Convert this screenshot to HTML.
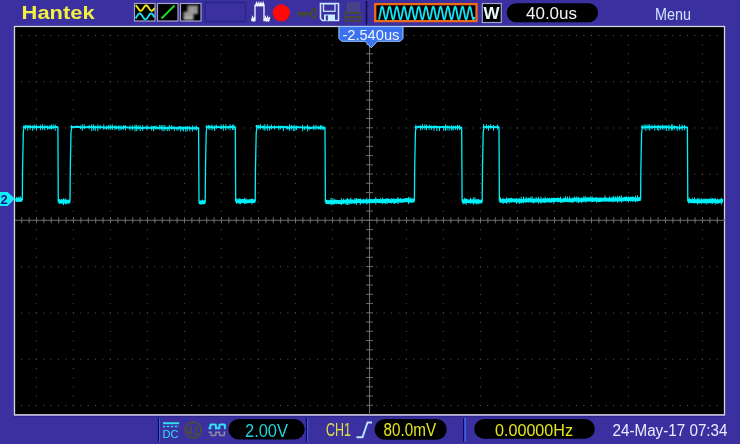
<!DOCTYPE html>
<html><head><meta charset="utf-8"><style>
html,body{margin:0;padding:0;background:#3a30a0;width:740px;height:444px;overflow:hidden}
svg{display:block;will-change:transform}
</style></head><body>
<svg width="740" height="444" viewBox="0 0 740 444">
<defs><filter id="bl" x="-20%" y="-20%" width="140%" height="140%"><feGaussianBlur stdDeviation="0.8"/></filter></defs>
<rect width="740" height="444" fill="#3a30a0"/>
<rect x="14.5" y="26.5" width="710" height="388.3" fill="#000" stroke="#d4d4dc" stroke-width="1.3"/>
<line x1="14" y1="415.4" x2="725" y2="415.4" stroke="#a8a6d0" stroke-width="1"/>
<line x1="14" y1="416.6" x2="725" y2="416.6" stroke="#2c2488" stroke-width="1"/>
<line x1="21" y1="35.50" x2="720" y2="35.50" stroke="#555555" stroke-width="1" stroke-dasharray="1 6.4"/>
<line x1="21" y1="81.75" x2="720" y2="81.75" stroke="#555555" stroke-width="1" stroke-dasharray="1 6.4"/>
<line x1="21" y1="128.00" x2="720" y2="128.00" stroke="#555555" stroke-width="1" stroke-dasharray="1 6.4"/>
<line x1="21" y1="174.25" x2="720" y2="174.25" stroke="#555555" stroke-width="1" stroke-dasharray="1 6.4"/>
<line x1="21" y1="220.50" x2="720" y2="220.50" stroke="#555555" stroke-width="1" stroke-dasharray="1 6.4"/>
<line x1="21" y1="266.75" x2="720" y2="266.75" stroke="#555555" stroke-width="1" stroke-dasharray="1 6.4"/>
<line x1="21" y1="313.00" x2="720" y2="313.00" stroke="#555555" stroke-width="1" stroke-dasharray="1 6.4"/>
<line x1="21" y1="359.25" x2="720" y2="359.25" stroke="#555555" stroke-width="1" stroke-dasharray="1 6.4"/>
<line x1="21" y1="405.50" x2="720" y2="405.50" stroke="#555555" stroke-width="1" stroke-dasharray="1 6.4"/>
<line x1="36.40" y1="35" x2="36.40" y2="406" stroke="#585858" stroke-width="1" stroke-dasharray="1 8.25"/>
<line x1="73.40" y1="35" x2="73.40" y2="406" stroke="#585858" stroke-width="1" stroke-dasharray="1 8.25"/>
<line x1="110.40" y1="35" x2="110.40" y2="406" stroke="#585858" stroke-width="1" stroke-dasharray="1 8.25"/>
<line x1="147.40" y1="35" x2="147.40" y2="406" stroke="#585858" stroke-width="1" stroke-dasharray="1 8.25"/>
<line x1="184.40" y1="35" x2="184.40" y2="406" stroke="#585858" stroke-width="1" stroke-dasharray="1 8.25"/>
<line x1="221.40" y1="35" x2="221.40" y2="406" stroke="#585858" stroke-width="1" stroke-dasharray="1 8.25"/>
<line x1="258.40" y1="35" x2="258.40" y2="406" stroke="#585858" stroke-width="1" stroke-dasharray="1 8.25"/>
<line x1="295.40" y1="35" x2="295.40" y2="406" stroke="#585858" stroke-width="1" stroke-dasharray="1 8.25"/>
<line x1="332.40" y1="35" x2="332.40" y2="406" stroke="#585858" stroke-width="1" stroke-dasharray="1 8.25"/>
<line x1="369.40" y1="35" x2="369.40" y2="406" stroke="#585858" stroke-width="1" stroke-dasharray="1 8.25"/>
<line x1="406.40" y1="35" x2="406.40" y2="406" stroke="#585858" stroke-width="1" stroke-dasharray="1 8.25"/>
<line x1="443.40" y1="35" x2="443.40" y2="406" stroke="#585858" stroke-width="1" stroke-dasharray="1 8.25"/>
<line x1="480.40" y1="35" x2="480.40" y2="406" stroke="#585858" stroke-width="1" stroke-dasharray="1 8.25"/>
<line x1="517.40" y1="35" x2="517.40" y2="406" stroke="#585858" stroke-width="1" stroke-dasharray="1 8.25"/>
<line x1="554.40" y1="35" x2="554.40" y2="406" stroke="#585858" stroke-width="1" stroke-dasharray="1 8.25"/>
<line x1="591.40" y1="35" x2="591.40" y2="406" stroke="#585858" stroke-width="1" stroke-dasharray="1 8.25"/>
<line x1="628.40" y1="35" x2="628.40" y2="406" stroke="#585858" stroke-width="1" stroke-dasharray="1 8.25"/>
<line x1="665.40" y1="35" x2="665.40" y2="406" stroke="#585858" stroke-width="1" stroke-dasharray="1 8.25"/>
<line x1="702.40" y1="35" x2="702.40" y2="406" stroke="#585858" stroke-width="1" stroke-dasharray="1 8.25"/>
<line x1="15" y1="220.3" x2="725" y2="220.3" stroke="#6e6e6e" stroke-width="1"/>
<line x1="369.5" y1="27" x2="369.5" y2="415" stroke="#6e6e6e" stroke-width="1"/>
<path d="M21.70 217.3V223.3M29.10 217.3V223.3M36.50 217.3V223.3M43.90 217.3V223.3M51.30 217.3V223.3M58.70 217.3V223.3M66.10 217.3V223.3M73.50 217.3V223.3M80.90 217.3V223.3M88.30 217.3V223.3M95.70 217.3V223.3M103.10 217.3V223.3M110.50 217.3V223.3M117.90 217.3V223.3M125.30 217.3V223.3M132.70 217.3V223.3M140.10 217.3V223.3M147.50 217.3V223.3M154.90 217.3V223.3M162.30 217.3V223.3M169.70 217.3V223.3M177.10 217.3V223.3M184.50 217.3V223.3M191.90 217.3V223.3M199.30 217.3V223.3M206.70 217.3V223.3M214.10 217.3V223.3M221.50 217.3V223.3M228.90 217.3V223.3M236.30 217.3V223.3M243.70 217.3V223.3M251.10 217.3V223.3M258.50 217.3V223.3M265.90 217.3V223.3M273.30 217.3V223.3M280.70 217.3V223.3M288.10 217.3V223.3M295.50 217.3V223.3M302.90 217.3V223.3M310.30 217.3V223.3M317.70 217.3V223.3M325.10 217.3V223.3M332.50 217.3V223.3M339.90 217.3V223.3M347.30 217.3V223.3M354.70 217.3V223.3M362.10 217.3V223.3M369.50 217.3V223.3M376.90 217.3V223.3M384.30 217.3V223.3M391.70 217.3V223.3M399.10 217.3V223.3M406.50 217.3V223.3M413.90 217.3V223.3M421.30 217.3V223.3M428.70 217.3V223.3M436.10 217.3V223.3M443.50 217.3V223.3M450.90 217.3V223.3M458.30 217.3V223.3M465.70 217.3V223.3M473.10 217.3V223.3M480.50 217.3V223.3M487.90 217.3V223.3M495.30 217.3V223.3M502.70 217.3V223.3M510.10 217.3V223.3M517.50 217.3V223.3M524.90 217.3V223.3M532.30 217.3V223.3M539.70 217.3V223.3M547.10 217.3V223.3M554.50 217.3V223.3M561.90 217.3V223.3M569.30 217.3V223.3M576.70 217.3V223.3M584.10 217.3V223.3M591.50 217.3V223.3M598.90 217.3V223.3M606.30 217.3V223.3M613.70 217.3V223.3M621.10 217.3V223.3M628.50 217.3V223.3M635.90 217.3V223.3M643.30 217.3V223.3M650.70 217.3V223.3M658.10 217.3V223.3M665.50 217.3V223.3M672.90 217.3V223.3M680.30 217.3V223.3M687.70 217.3V223.3M695.10 217.3V223.3M702.50 217.3V223.3M709.90 217.3V223.3M717.30 217.3V223.3M366.1 35.30H372.9M366.1 44.55H372.9M366.1 53.80H372.9M366.1 63.05H372.9M366.1 72.30H372.9M366.1 81.55H372.9M366.1 90.80H372.9M366.1 100.05H372.9M366.1 109.30H372.9M366.1 118.55H372.9M366.1 127.80H372.9M366.1 137.05H372.9M366.1 146.30H372.9M366.1 155.55H372.9M366.1 164.80H372.9M366.1 174.05H372.9M366.1 183.30H372.9M366.1 192.55H372.9M366.1 201.80H372.9M366.1 211.05H372.9M366.1 220.30H372.9M366.1 229.55H372.9M366.1 238.80H372.9M366.1 248.05H372.9M366.1 257.30H372.9M366.1 266.55H372.9M366.1 275.80H372.9M366.1 285.05H372.9M366.1 294.30H372.9M366.1 303.55H372.9M366.1 312.80H372.9M366.1 322.05H372.9M366.1 331.30H372.9M366.1 340.55H372.9M366.1 349.80H372.9M366.1 359.05H372.9M366.1 368.30H372.9M366.1 377.55H372.9M366.1 386.80H372.9M366.1 396.05H372.9M366.1 405.30H372.9" stroke="#6e6e6e" stroke-width="1"/>
<path d="M15.0 199.8L22.3 199.8L22.6 167.2 L23.3 133.2 Q23.6 127.2 24.9 127.2L57.9 127.3L58.3 201.5L70.0 201.5L70.3 167.2 L71.0 133.2 Q71.3 127.2 72.6 127.2L198.6 128.2L199.0 202.0L205.2 202.0L205.5 167.2 L206.2 133.2 Q206.5 127.2 207.8 127.2L235.3 127.2L235.7 201.2L255.2 201.2L255.5 167.2 L256.2 133.2 Q256.5 127.2 257.8 127.2L325.0 127.6L325.4 202.0L414.4 200.4L414.7 167.2 L415.4 133.2 Q415.7 127.2 417.0 127.2L461.7 127.4L462.1 201.3L482.2 201.3L482.5 167.2 L483.2 133.2 Q483.5 127.2 484.8 127.2L499.0 127.1L499.4 200.9L640.6 199.0L640.9 167.2 L641.6 133.2 Q641.9 127.2 643.2 127.2L687.4 127.4L687.8 201.2L723.0 201.2" fill="none" stroke="#00f0fa" stroke-width="1.3" stroke-linejoin="round"/><path d="M15.5 199.8L17.0 199.7L19.0 200.0L21.0 199.7L22.3 199.8M58.4 201.5L59.9 201.4L61.9 201.8L63.9 201.1L65.9 202.0L67.9 201.7L70.0 201.5M199.1 202.0L200.6 202.5L202.6 202.3L205.2 202.0M235.8 201.2L237.3 201.1L239.3 201.1L241.3 201.2L243.3 201.0L245.3 201.4L247.3 201.3L249.3 201.2L251.3 201.0L253.3 201.1L255.2 201.2M325.5 202.0L327.0 201.8L329.0 202.3L331.0 201.8L333.0 202.1L335.0 201.6L337.0 201.8L339.0 202.0L341.0 202.2L343.0 201.6L345.0 201.6L347.0 201.7L349.0 201.1L351.0 201.5L353.0 201.3L355.0 201.6L357.0 201.1L359.0 200.8L361.0 201.4L363.0 201.4L365.0 201.1L367.0 201.5L369.0 201.1L371.0 201.0L373.0 201.3L375.0 200.6L377.0 200.9L379.0 201.0L381.0 201.3L383.0 200.9L385.0 201.0L387.0 200.7L389.0 200.9L391.0 201.3L393.0 200.6L395.0 201.5L397.0 200.5L399.0 200.7L401.0 200.7L403.0 200.9L405.0 200.2L407.0 199.9L409.0 200.7L411.0 200.7L413.0 200.6L414.4 200.4M462.2 201.3L463.7 201.3L465.7 200.8L467.7 201.1L469.7 201.3L471.7 201.2L473.7 201.3L475.7 201.5L477.7 201.5L479.7 201.6L482.2 201.3M499.5 200.9L501.0 200.9L503.0 200.8L505.0 200.9L507.0 200.6L509.0 200.2L511.0 200.1L513.0 200.3L515.0 200.5L517.0 200.7L519.0 200.6L521.0 200.8L523.0 200.6L525.0 200.3L527.0 200.3L529.0 199.9L531.0 200.4L533.0 200.6L535.0 200.6L537.0 200.4L539.0 200.3L541.0 200.6L543.0 200.3L545.0 200.5L547.0 200.4L549.0 200.3L551.0 200.6L553.0 200.0L555.0 200.0L557.0 199.9L559.0 199.9L561.0 200.5L563.0 200.6L565.0 200.0L567.0 200.2L569.0 200.3L571.0 200.2L573.0 200.3L575.0 199.5L577.0 199.7L579.0 200.0L581.0 200.2L583.0 199.8L585.0 199.5L587.0 199.6L589.0 199.5L591.0 199.4L593.0 200.1L595.0 199.4L597.0 199.6L599.0 200.2L601.0 199.9L603.0 199.6L605.0 199.3L607.0 199.6L609.0 199.9L611.0 199.6L613.0 199.7L615.0 199.4L617.0 199.5L619.0 199.2L621.0 199.4L623.0 199.6L625.0 198.8L627.0 199.2L629.0 199.2L631.0 199.0L633.0 199.0L635.0 199.3L637.0 199.6L639.0 199.2L640.6 199.0M687.9 201.2L689.4 200.6L691.4 201.4L693.4 201.0L695.4 201.1L697.4 201.2L699.4 201.4L701.4 201.1L703.4 201.2L705.4 201.0L707.4 201.2L709.4 200.8L711.4 201.2L713.4 200.6L715.4 201.1L717.4 201.8L719.4 201.2L721.4 200.8L723.0 201.2" fill="none" stroke="#00f0fa" stroke-width="3.8"/><path d="M22.8 126.9L24.3 126.8L26.3 126.4L28.3 126.4L30.3 126.7L32.3 126.9L34.3 127.1L36.3 127.0L38.3 127.2L40.3 126.9L42.3 127.2L44.3 127.2L46.3 126.9L48.3 127.7L50.3 127.3L52.3 127.6L54.3 127.0L56.3 127.0L57.9 127.3M70.5 126.9L72.0 126.9L74.0 127.3L76.0 126.6L78.0 126.7L80.0 127.2L82.0 127.4L84.0 127.3L86.0 127.2L88.0 127.1L90.0 127.1L92.0 127.3L94.0 127.1L96.0 127.2L98.0 127.4L100.0 127.2L102.0 127.4L104.0 127.4L106.0 127.9L108.0 127.4L110.0 127.2L112.0 127.2L114.0 127.3L116.0 127.6L118.0 127.3L120.0 127.5L122.0 128.0L124.0 126.7L126.0 127.1L128.0 127.6L130.0 127.6L132.0 127.6L134.0 127.4L136.0 127.8L138.0 127.7L140.0 127.4L142.0 128.3L144.0 127.7L146.0 127.5L148.0 127.7L150.0 127.6L152.0 127.7L154.0 126.9L156.0 127.6L158.0 128.1L160.0 127.4L162.0 127.8L164.0 128.1L166.0 128.1L168.0 128.3L170.0 127.4L172.0 127.8L174.0 127.8L176.0 128.1L178.0 128.3L180.0 127.2L182.0 128.3L184.0 127.6L186.0 128.3L188.0 127.6L190.0 128.2L192.0 128.5L194.0 128.1L196.0 128.2L198.6 128.2M205.7 126.9L207.2 127.1L209.2 127.2L211.2 126.9L213.2 127.7L215.2 127.4L217.2 127.0L219.2 127.1L221.2 127.8L223.2 127.0L225.2 127.4L227.2 127.4L229.2 127.1L231.2 126.8L233.2 127.2L235.3 127.2M255.7 126.9L257.2 126.1L259.2 126.7L261.2 127.0L263.2 127.2L265.2 127.7L267.2 127.1L269.2 127.4L271.2 127.3L273.2 127.4L275.2 127.3L277.2 127.1L279.2 127.3L281.2 126.8L283.2 127.5L285.2 126.9L287.2 127.3L289.2 127.9L291.2 127.2L293.2 127.3L295.2 127.6L297.2 127.3L299.2 127.1L301.2 127.4L303.2 127.6L305.2 127.6L307.2 127.2L309.2 128.0L311.2 128.0L313.2 127.5L315.2 127.6L317.2 127.4L319.2 128.0L321.2 127.3L323.2 127.8L325.0 127.6M414.9 126.9L416.4 127.7L418.4 126.8L420.4 126.8L422.4 127.2L424.4 127.0L426.4 126.9L428.4 126.9L430.4 127.0L432.4 127.3L434.4 127.2L436.4 126.8L438.4 127.3L440.4 127.2L442.4 126.9L444.4 127.4L446.4 127.1L448.4 127.1L450.4 127.5L452.4 127.7L454.4 127.1L456.4 127.5L458.4 127.1L460.4 128.1L461.7 127.4M482.7 126.9L484.2 127.1L486.2 127.0L488.2 127.2L490.2 126.7L492.2 127.0L494.2 127.2L496.2 127.1L499.0 127.1M641.1 126.9L642.6 127.2L644.6 127.4L646.6 127.3L648.6 126.8L650.6 127.3L652.6 127.3L654.6 126.6L656.6 126.9L658.6 126.7L660.6 127.1L662.6 127.3L664.6 126.8L666.6 126.5L668.6 127.6L670.6 127.3L672.6 127.7L674.6 126.8L676.6 127.6L678.6 127.9L680.6 127.9L682.6 127.3L684.6 127.4L687.4 127.4" fill="none" stroke="#00f0fa" stroke-width="1.9"/><path d="M16.5 197.1V201.7M18.6 196.9V201.7M20.1 196.1V201.8M23.8 125.6V128.8M25.5 125.0V129.4M27.7 125.2V130.5M30.1 124.7V129.9M32.7 125.3V131.0M34.3 124.5V129.2M36.4 124.6V130.5M40.4 124.8V130.2M42.4 124.2V129.9M44.8 124.7V130.3M47.6 125.4V129.8M49.9 125.1V129.3M51.5 124.6V129.3M53.2 124.4V129.2M55.2 124.4V130.8M59.4 199.0V203.7M61.5 199.0V203.3M63.5 198.4V205.0M65.8 198.3V204.5M71.5 125.2V129.3M80.6 125.4V129.2M82.3 124.2V130.7M84.3 124.4V129.0M89.2 125.0V129.3M91.7 124.5V131.1M93.6 124.2V130.5M95.3 125.7V130.9M97.8 124.5V131.1M100.1 125.0V129.3M103.8 124.4V130.0M106.5 125.7V129.6M108.3 125.0V129.7M110.3 124.5V129.9M112.3 124.5V130.0M115.0 125.2V130.3M116.4 125.8V129.2M118.9 125.3V130.8M121.1 125.3V130.4M123.6 125.2V129.8M125.4 125.3V130.5M129.9 125.4V130.4M132.3 125.4V130.4M135.0 124.8V131.4M136.7 124.7V131.2M138.3 125.6V129.5M140.1 125.2V131.1M142.7 125.1V130.9M147.1 124.8V130.3M151.7 125.7V130.7M153.6 126.0V131.1M155.0 125.8V129.6M156.9 125.6V129.7M159.7 124.8V129.8M161.4 125.2V130.2M163.0 125.0V131.4M164.8 125.0V130.9M167.2 126.6V131.2M169.2 125.0V131.1M171.7 125.2V129.9M174.3 126.1V131.0M177.0 126.5V130.9M178.7 126.5V129.9M180.4 126.3V131.5M182.2 126.5V130.6M183.6 126.8V131.4M185.8 126.0V131.9M187.4 126.1V131.0M189.9 126.0V131.4M192.7 125.4V131.5M195.0 126.3V130.1M196.6 125.6V130.5M202.4 199.5V204.3M206.7 124.8V128.7M208.5 125.0V128.8M209.9 125.3V130.0M212.0 124.6V130.3M214.7 125.2V131.0M216.3 124.7V128.9M221.1 124.4V129.2M223.3 124.4V130.7M225.8 124.3V130.4M228.2 125.9V129.2M230.1 124.4V130.2M232.4 124.7V130.0M233.8 124.6V130.1M236.8 198.4V203.9M239.2 198.0V204.2M240.7 198.7V204.3M242.5 199.2V203.1M244.3 197.8V204.2M246.1 198.3V203.8M252.0 198.3V204.5M256.7 125.0V130.9M258.9 125.0V129.3M260.4 124.2V129.4M263.1 125.3V129.9M264.8 124.1V130.7M267.3 124.2V130.9M269.5 125.8V130.5M271.5 124.7V129.5M274.6 125.3V129.5M278.8 125.4V130.2M280.7 125.7V129.4M283.4 125.6V131.0M286.2 125.8V129.4M287.7 125.9V129.6M289.5 124.4V130.7M291.4 125.1V129.9M293.3 125.6V131.2M294.9 125.0V131.0M296.6 125.7V130.0M302.6 124.9V131.1M304.7 126.2V130.1M307.4 124.7V131.4M309.1 126.0V130.4M313.9 124.9V130.3M316.1 124.9V129.8M318.8 125.8V129.6M320.5 125.1V129.6M322.0 125.3V130.2M323.7 126.4V130.0M326.5 199.9V203.9M331.1 197.9V205.4M332.9 198.0V205.0M334.4 199.1V204.3M336.3 199.8V204.1M341.4 198.1V205.0M343.4 198.7V204.1M346.1 198.9V205.0M347.5 198.0V204.8M349.0 199.4V205.0M350.8 197.7V203.9M354.8 198.0V203.8M356.6 197.9V204.9M360.3 198.4V204.9M363.1 198.8V203.9M366.8 197.8V204.5M369.3 198.6V203.6M371.2 199.0V203.3M373.6 199.0V203.0M375.8 197.1V204.5M378.6 198.9V203.0M380.7 198.1V203.2M382.7 197.6V204.1M385.3 198.7V204.2M387.1 198.1V204.0M388.8 198.4V202.9M391.4 198.2V203.3M394.2 198.3V204.0M398.0 197.1V204.0M400.7 198.1V202.7M408.6 196.9V204.0M410.1 197.2V202.7M412.0 198.0V202.7M415.9 124.7V129.5M420.7 125.4V130.4M422.4 124.2V129.7M424.9 124.2V129.8M426.5 124.8V130.2M429.2 124.7V129.7M431.3 125.4V130.0M434.0 125.0V130.7M436.8 125.7V131.0M439.5 125.9V131.0M443.7 125.7V130.7M445.5 124.5V130.8M447.1 125.3V130.2M449.1 125.6V130.6M451.7 125.1V130.7M453.2 125.9V130.4M455.3 125.6V130.0M457.5 124.9V130.1M459.6 125.0V130.2M463.2 199.2V204.2M464.7 197.7V204.0M466.2 198.5V204.8M470.6 197.7V203.4M473.4 197.4V204.7M475.0 197.4V203.2M476.9 199.0V204.7M478.7 199.0V204.0M483.7 124.0V130.2M486.4 124.3V129.0M488.5 125.1V130.7M490.7 124.2V129.0M493.5 125.1V130.6M497.4 124.5V129.8M500.5 197.4V202.7M503.1 197.9V204.0M505.1 198.6V203.0M506.6 197.3V203.8M509.2 198.2V203.6M511.2 197.7V203.0M516.6 198.2V203.8M519.3 198.0V204.0M521.2 196.8V203.5M523.5 196.6V203.2M526.1 196.8V203.1M528.5 197.9V202.7M530.8 196.7V202.5M532.2 196.6V202.9M533.8 198.3V203.5M536.1 196.9V202.3M538.4 196.7V203.6M541.0 196.6V203.8M543.7 197.9V202.3M545.2 196.7V203.2M547.7 197.7V202.2M549.3 197.8V202.6M551.3 197.7V202.5M553.7 197.5V203.7M558.0 197.3V202.7M560.5 196.7V202.8M563.7 197.7V201.8M565.4 196.1V201.8M567.5 196.4V202.1M569.6 196.3V202.2M572.3 197.5V203.0M574.4 196.6V201.8M576.9 196.3V202.8M578.8 197.0V203.2M581.8 197.3V203.2M583.9 196.0V202.0M585.9 196.2V202.9M588.2 197.0V201.8M590.8 196.2V201.8M592.8 196.5V201.7M596.6 197.0V202.7M599.2 197.2V201.8M601.0 197.2V201.9M605.1 195.6V201.5M609.6 196.5V201.6M611.9 197.0V201.9M613.3 195.8V202.4M615.4 196.4V201.4M617.7 195.8V202.7M619.7 195.8V201.8M621.4 195.5V202.5M626.1 196.3V201.6M628.4 196.3V202.4M630.8 196.6V201.7M632.8 196.3V202.1M635.5 195.8V202.3M637.5 195.1V200.9M642.1 125.0V128.7M644.1 124.5V129.5M645.9 124.4V130.8M648.0 124.3V129.6M649.7 124.4V130.6M652.0 124.8V129.3M654.7 124.7V130.6M657.3 125.3V130.1M658.8 125.2V130.8M660.6 125.4V129.8M662.3 124.6V129.5M664.0 125.1V129.9M666.3 125.3V131.0M668.9 124.5V131.0M671.4 124.5V130.4M672.8 124.3V130.5M674.6 125.8V129.6M677.1 125.8V131.1M679.6 124.5V130.4M682.1 124.5V130.8M684.6 124.9V130.3M688.9 197.5V203.7M692.4 197.9V203.1M694.6 197.3V203.6M697.4 198.2V204.6M698.9 197.9V203.6M701.5 198.3V203.9M704.0 198.3V203.8M706.1 198.6V204.5M708.1 198.7V203.9M710.9 197.6V203.6M712.7 198.0V204.1M715.2 197.8V204.6M717.4 198.6V203.0M721.3 197.6V204.6" fill="none" stroke="#00f0fa" stroke-width="1"/>
<!-- top bar -->
<text x="21.6" y="18.9" font-family="Liberation Sans" font-weight="bold" font-size="18.4" fill="#f2f040" textLength="73" lengthAdjust="spacingAndGlyphs">Hantek</text>
<!-- icon boxes -->
<rect x="134.5" y="3.5" width="20.5" height="17.5" fill="#000" stroke="#a4a4c8" stroke-width="1.2"/>
<path d="M135.50 5.44L135.74 5.53L135.97 5.66L136.21 5.84L136.45 6.06L136.69 6.32L136.93 6.61L137.16 6.93L137.40 7.27L137.64 7.62L137.88 7.98L138.11 8.35L138.35 8.71L138.59 9.06L138.82 9.39L139.06 9.70L139.30 9.98L139.54 10.23L139.78 10.43L140.01 10.59L140.25 10.71L140.49 10.78L140.72 10.80L140.96 10.77L141.20 10.69L141.44 10.56L141.68 10.39L141.91 10.18L142.15 9.93L142.39 9.64L142.62 9.33L142.86 8.99L143.10 8.64L143.34 8.27L143.57 7.91L143.81 7.54L144.05 7.19L144.29 6.86L144.53 6.54L144.76 6.26L145.00 6.01L145.24 5.80L145.47 5.63L145.71 5.50L145.95 5.43L146.19 5.40L146.43 5.42L146.66 5.49L146.90 5.61L147.14 5.78L147.38 5.99L147.61 6.23L147.85 6.51L148.09 6.82L148.32 7.16L148.56 7.51L148.80 7.87L149.04 8.23L149.28 8.60L149.51 8.95L149.75 9.29L149.99 9.61L150.22 9.90L150.46 10.15L150.70 10.37L150.94 10.55L151.18 10.68L151.41 10.76L151.65 10.80L151.89 10.78L152.12 10.72L152.36 10.61L152.60 10.45L152.84 10.25L153.07 10.01L153.31 9.73L153.55 9.43L153.79 9.10L154.03 8.75L154.26 8.39L154.50 8.02" fill="none" stroke="#f0e818" stroke-width="1.9"/>
<path d="M135.50 18.36L135.74 18.07L135.97 17.74L136.21 17.40L136.45 17.03L136.69 16.66L136.93 16.28L137.16 15.90L137.40 15.53L137.64 15.18L137.88 14.85L138.11 14.54L138.35 14.27L138.59 14.03L138.82 13.83L139.06 13.68L139.30 13.57L139.54 13.51L139.78 13.50L140.01 13.54L140.25 13.63L140.49 13.77L140.72 13.95L140.96 14.17L141.20 14.44L141.44 14.73L141.68 15.06L141.91 15.40L142.15 15.77L142.39 16.14L142.62 16.52L142.86 16.90L143.10 17.27L143.34 17.62L143.57 17.95L143.81 18.26L144.05 18.53L144.29 18.77L144.53 18.97L144.76 19.12L145.00 19.23L145.24 19.29L145.47 19.30L145.71 19.26L145.95 19.17L146.19 19.03L146.43 18.85L146.66 18.63L146.90 18.36L147.14 18.07L147.38 17.74L147.61 17.40L147.85 17.03L148.09 16.66L148.32 16.28L148.56 15.90L148.80 15.53L149.04 15.18L149.28 14.85L149.51 14.54L149.75 14.27L149.99 14.03L150.22 13.83L150.46 13.68L150.70 13.57L150.94 13.51L151.18 13.50L151.41 13.54L151.65 13.63L151.89 13.77L152.12 13.95L152.36 14.17L152.60 14.44L152.84 14.73L153.07 15.06L153.31 15.40L153.55 15.77L153.79 16.14L154.03 16.52L154.26 16.90L154.50 17.27" fill="none" stroke="#18e0f0" stroke-width="1.9"/>
<rect x="157.5" y="3.5" width="20.5" height="17.5" fill="#000" stroke="#a4a4c8" stroke-width="1.2"/>
<path d="M161.5 18.5 L174.5 5.5" stroke="#20e020" stroke-width="1.8"/>
<rect x="180.5" y="3.5" width="20.5" height="17.5" fill="#000" stroke="#a4a4c8" stroke-width="1.2"/>
<g filter="url(#bl)"><path d="M183.5 19.8 V11.8 H187.5 V5.5 H198 V14 H193.5 V19.8 Z" fill="#a8a6a4"/>
<path d="M186 12 V19.5 M190 6 V19.5 M194 6 V13.5 M197 7 V12" stroke="#5a5a5a" stroke-width="0.8"/>
<path d="M184 18.5 H193" stroke="#d8d0c8" stroke-width="1.5"/></g>
<rect x="205" y="2.5" width="40.5" height="19" fill="none" stroke="#2a2688" stroke-width="1.5"/>
<!-- pulse icon -->
<path d="M251.5 20.5 H255 V5.5 H264 V20.5 H269.5" fill="none" stroke="#eef6ff" stroke-width="1.3"/>
<path d="M255.5 5.5 L256.6 2.6 L257.7 5.5 L258.8 2.6 L259.9 5.5 L261 2.6 L262.1 5.5 L263.2 2.6 L264 5.5" fill="none" stroke="#eef6ff" stroke-width="1.2"/>
<path d="M251.5 20.5 L252.6 17 L253.7 20.5 L254.8 17 M264.3 20.5 L265.4 17 L266.5 20.5 L267.6 17 L268.7 20.5 L269.8 17" fill="none" stroke="#eef6ff" stroke-width="1.2"/>
<circle cx="281.3" cy="12.8" r="8.6" fill="#ff0808"/>
<!-- key -->
<path d="M297 13.5 H311" stroke="#484a2c" stroke-width="2.6"/>
<path d="M300 14 V17 M303.5 14 V17 M306 14 V16.5" stroke="#484a2c" stroke-width="1.6"/>
<ellipse cx="313.6" cy="13.2" rx="2.3" ry="4.6" fill="none" stroke="#484a2c" stroke-width="1.8"/>
<!-- floppy -->
<path d="M320.5 3.5 H338.5 V20.5 H322.5 L320.5 18.5 Z" fill="none" stroke="#c8e4ff" stroke-width="1.6"/>
<rect x="323.5" y="3.8" width="11.5" height="7.5" fill="none" stroke="#c8e4ff" stroke-width="1.3"/>
<rect x="324" y="14.5" width="11" height="6" fill="#c8f0ff"/>
<rect x="325.8" y="15.5" width="2" height="5" fill="#3a30a0"/>
<!-- printer -->
<rect x="347.6" y="3.2" width="11.3" height="7.6" fill="#44428a" stroke="#4a4a80" stroke-width="1.4"/>
<path d="M344.5 12.9 H361.2 M345 17 H360.8 M344.5 20.6 H361.2" stroke="#4a4a32" stroke-width="2"/>
<path d="M344.9 12.9 V20.6 M360.9 12.9 V20.6" stroke="#4a4a40" stroke-width="1.2"/>
<line x1="366.5" y1="1" x2="366.5" y2="24.5" stroke="#12104a" stroke-width="1.6"/>
<!-- orange wave box -->
<rect x="375.2" y="4.1" width="101.3" height="17" fill="#000" stroke="#f06a18" stroke-width="2.3"/>
<path d="M378.50 19.29L378.74 19.22L378.98 18.87L379.22 18.28L379.46 17.46L379.70 16.44L379.94 15.29L380.18 14.03L380.42 12.73L380.67 11.44L380.91 10.22L381.15 9.12L381.39 8.18L381.63 7.45L381.87 6.95L382.11 6.72L382.35 6.75L382.59 7.05L382.83 7.61L383.07 8.39L383.31 9.37L383.55 10.51L383.79 11.75L384.03 13.05L384.27 14.34L384.52 15.58L384.76 16.71L385.00 17.67L385.24 18.44L385.48 18.98L385.72 19.26L385.96 19.27L386.20 19.02L386.44 18.51L386.68 17.76L386.92 16.81L387.16 15.69L387.40 14.47L387.64 13.17L387.88 11.88L388.12 10.63L388.36 9.48L388.61 8.48L388.85 7.67L389.09 7.09L389.33 6.77L389.57 6.71L389.81 6.92L390.05 7.39L390.29 8.10L390.53 9.02L390.77 10.11L391.01 11.32L391.25 12.60L391.49 13.91L391.73 15.17L391.97 16.34L392.21 17.36L392.45 18.21L392.70 18.82L392.94 19.19L393.18 19.30L393.42 19.13L393.66 18.71L393.90 18.04L394.14 17.15L394.38 16.09L394.62 14.89L394.86 13.62L395.10 12.32L395.34 11.04L395.58 9.85L395.82 8.80L396.06 7.92L396.30 7.26L396.55 6.85L396.79 6.70L397.03 6.82L397.27 7.20L397.51 7.83L397.75 8.68L397.99 9.72L398.23 10.90L398.47 12.16L398.71 13.46L398.95 14.75L399.19 15.95L399.43 17.03L399.67 17.94L399.91 18.64L400.15 19.10L400.39 19.29L400.64 19.22L400.88 18.88L401.12 18.29L401.36 17.48L401.60 16.47L401.84 15.31L402.08 14.06L402.32 12.76L402.56 11.47L402.80 10.25L403.04 9.14L403.28 8.20L403.52 7.46L403.76 6.96L404.00 6.72L404.24 6.75L404.48 7.04L404.73 7.59L404.97 8.37L405.21 9.35L405.45 10.48L405.69 11.72L405.93 13.02L406.17 14.31L406.41 15.55L406.65 16.68L406.89 17.66L407.13 18.43L407.37 18.97L407.61 19.26L407.85 19.28L408.09 19.03L408.33 18.52L408.58 17.78L408.82 16.83L409.06 15.72L409.30 14.49L409.54 13.20L409.78 11.90L410.02 10.65L410.26 9.50L410.50 8.50L410.74 7.69L410.98 7.10L411.22 6.77L411.46 6.71L411.70 6.91L411.94 7.38L412.18 8.08L412.42 9.00L412.67 10.08L412.91 11.29L413.15 12.58L413.39 13.88L413.63 15.14L413.87 16.31L414.11 17.34L414.35 18.19L414.59 18.81L414.83 19.19L415.07 19.30L415.31 19.14L415.55 18.72L415.79 18.05L416.03 17.17L416.27 16.11L416.52 14.92L416.76 13.65L417.00 12.34L417.24 11.07L417.48 9.88L417.72 8.82L417.96 7.94L418.20 7.28L418.44 6.86L418.68 6.70L418.92 6.81L419.16 7.19L419.40 7.82L419.64 8.66L419.88 9.70L420.12 10.87L420.36 12.13L420.61 13.43L420.85 14.72L421.09 15.93L421.33 17.01L421.57 17.92L421.81 18.63L422.05 19.09L422.29 19.29L422.53 19.22L422.77 18.89L423.01 18.31L423.25 17.50L423.49 16.49L423.73 15.34L423.97 14.09L424.21 12.79L424.45 11.50L424.70 10.27L424.94 9.16L425.18 8.22L425.42 7.48L425.66 6.97L425.90 6.72L426.14 6.75L426.38 7.03L426.62 7.58L426.86 8.35L427.10 9.33L427.34 10.46L427.58 11.70L427.82 12.99L428.06 14.29L428.30 15.53L428.55 16.66L428.79 17.64L429.03 18.41L429.27 18.96L429.51 19.25L429.75 19.28L429.99 19.03L430.23 18.53L430.47 17.80L430.71 16.85L430.95 15.75L431.19 14.52L431.43 13.23L431.67 11.93L431.91 10.68L432.15 9.52L432.39 8.52L432.64 7.70L432.88 7.12L433.12 6.78L433.36 6.71L433.60 6.91L433.84 7.36L434.08 8.06L434.32 8.97L434.56 10.06L434.80 11.26L435.04 12.55L435.28 13.85L435.52 15.11L435.76 16.29L436.00 17.32L436.24 18.17L436.48 18.80L436.73 19.18L436.97 19.30L437.21 19.15L437.45 18.73L437.69 18.07L437.93 17.19L438.17 16.14L438.41 14.95L438.65 13.67L438.89 12.37L439.13 11.10L439.37 9.90L439.61 8.84L439.85 7.96L440.09 7.29L440.33 6.86L440.58 6.70L440.82 6.81L441.06 7.18L441.30 7.80L441.54 8.64L441.78 9.67L442.02 10.84L442.26 12.11L442.50 13.41L442.74 14.69L442.98 15.90L443.22 16.99L443.46 17.91L443.70 18.61L443.94 19.08L444.18 19.29L444.42 19.23L444.67 18.90L444.91 18.32L445.15 17.52L445.39 16.52L445.63 15.37L445.87 14.11L446.11 12.82L446.35 11.52L446.59 10.30L446.83 9.18L447.07 8.24L447.31 7.49L447.55 6.98L447.79 6.73L448.03 6.74L448.27 7.02L448.52 7.56L448.76 8.33L449.00 9.30L449.24 10.43L449.48 11.67L449.72 12.96L449.96 14.26L450.20 15.50L450.44 16.64L450.68 17.62L450.92 18.40L451.16 18.95L451.40 19.25L451.64 19.28L451.88 19.04L452.12 18.55L452.36 17.81L452.61 16.88L452.85 15.77L453.09 14.55L453.33 13.26L453.57 11.96L453.81 10.70L454.05 9.55L454.29 8.54L454.53 7.72L454.77 7.13L455.01 6.78L455.25 6.71L455.49 6.90L455.73 7.35L455.97 8.05L456.21 8.95L456.45 10.03L456.70 11.24L456.94 12.52L457.18 13.82L457.42 15.09L457.66 16.26L457.90 17.30L458.14 18.16L458.38 18.79L458.62 19.18L458.86 19.30L459.10 19.15L459.34 18.74L459.58 18.09L459.82 17.22L460.06 16.16L460.30 14.98L460.55 13.70L460.79 12.40L461.03 11.12L461.27 9.93L461.51 8.86L461.75 7.97L461.99 7.30L462.23 6.87L462.47 6.70L462.71 6.80L462.95 7.17L463.19 7.78L463.43 8.62L463.67 9.65L463.91 10.82L464.15 12.08L464.39 13.38L464.64 14.66L464.88 15.88L465.12 16.97L465.36 17.89L465.60 18.60L465.84 19.07L466.08 19.29L466.32 19.23L466.56 18.91L466.80 18.34L467.04 17.54L467.28 16.54L467.52 15.39L467.76 14.14L468.00 12.84L468.24 11.55L468.48 10.32L468.73 9.21L468.97 8.25L469.21 7.50L469.45 6.99L469.69 6.73L469.93 6.74L470.17 7.02L470.41 7.55L470.65 8.31L470.89 9.28L471.13 10.40L471.37 11.64L471.61 12.93L471.85 14.23L472.09 15.47L472.33 16.61L472.58 17.60L472.82 18.38L473.06 18.94L473.30 19.25L473.54 19.28L473.78 19.05L474.02 18.56L474.26 17.83L474.50 16.90" fill="none" stroke="#10e4f4" stroke-width="1.8"/>
<!-- W box -->
<rect x="482.3" y="3.5" width="19" height="19" fill="#000" stroke="#a4a8c8" stroke-width="1.2"/>
<text x="483.5" y="18.9" font-family="Liberation Sans" font-weight="bold" font-size="17" fill="#e4fcff" textLength="16" lengthAdjust="spacingAndGlyphs">W</text>
<!-- time pill -->
<rect x="506.7" y="3.3" width="91.4" height="19" rx="9.5" fill="#000"/>
<text x="526" y="19.3" font-family="Liberation Sans" font-size="17.4" fill="#f4f4f4" textLength="51" lengthAdjust="spacingAndGlyphs">40.0us</text>
<text x="655" y="19.6" font-family="Liberation Sans" font-size="16.7" fill="#cfe2ff" textLength="36" lengthAdjust="spacingAndGlyphs">Menu</text>
<!-- trigger position label -->
<path d="M338.9 26.6 H403 V38.6 L400.3 41.3 H377.3 L371.2 47.8 L365.1 41.3 H341.6 L338.9 38.6 Z" fill="#3a72f0" stroke="#98ccff" stroke-width="1"/>
<text x="342.4" y="39.6" font-family="Liberation Sans" font-size="14.4" fill="#f0f4ff" textLength="57" lengthAdjust="spacingAndGlyphs">-2.540us</text>
<!-- channel marker -->
<path d="M0 192.1 H7.6 L15 198.8 L7.6 205.9 H0 Z" fill="#10ecfa"/>
<text x="0.6" y="203.6" font-family="Liberation Sans" font-weight="bold" font-size="13.4" fill="#14147a" textLength="7.2" lengthAdjust="spacingAndGlyphs">2</text>
<!-- bottom bar -->
<line x1="158.5" y1="418" x2="158.5" y2="441.7" stroke="#0c0a60" stroke-width="1.3"/><line x1="159.6" y1="418" x2="159.6" y2="441.7" stroke="#3a64e4" stroke-width="1"/>
<path d="M163 423.2 H179.2" stroke="#30e0f0" stroke-width="2"/>
<path d="M163 426.5 H179" stroke="#30e0f0" stroke-width="1.6" stroke-dasharray="2.3 1.6"/>
<text x="162.5" y="437.8" font-family="Liberation Sans" font-size="11.5" fill="#30e0f0" textLength="16" lengthAdjust="spacingAndGlyphs">DC</text>
<circle cx="193.2" cy="430" r="7.9" fill="none" stroke="#4c4c3c" stroke-width="2"/>
<text x="186.5" y="435" font-family="Liberation Sans" font-weight="bold" font-size="12" fill="#4c4c3c" textLength="13" lengthAdjust="spacingAndGlyphs">41</text>
<path d="M208.5 428.2 H210.3 V425.6 Q210.3 424.4 211.5 424.4 H214.7 Q215.9 424.4 215.9 425.6 V428.2 H219.3 V425.6 Q219.3 424.4 220.5 424.4 H223.7 Q224.9 424.4 224.9 425.6 V428.2 H225.5" fill="none" stroke="#30e4f4" stroke-width="2"/>
<path d="M208.5 432.3 H211 V434.4 Q211 435.6 212.2 435.6 H214.7 Q215.9 435.6 215.9 434.4 V432.3 H219.5 V434.4 Q219.5 435.6 220.7 435.6 H223.2 Q224.4 435.6 224.4 434.4 V432.3 H225.5" fill="none" stroke="#8c8ca0" stroke-width="1.5"/>
<rect x="228.4" y="419.1" width="76.3" height="20.4" rx="10.2" fill="#000"/>
<text x="245" y="437.1" font-family="Liberation Sans" font-size="17.5" fill="#20d4d8" textLength="43" lengthAdjust="spacingAndGlyphs">2.00V</text>
<line x1="306.5" y1="418" x2="306.5" y2="441.7" stroke="#0c0a60" stroke-width="1.3"/><line x1="307.7" y1="418" x2="307.7" y2="441.7" stroke="#3a64e4" stroke-width="1"/>
<text x="326" y="435.9" font-family="Liberation Sans" font-size="17.5" fill="#e0e040" textLength="25" lengthAdjust="spacingAndGlyphs">CH1</text>
<path d="M356.5 437.2 H362.5 L367.5 422.5 H372" fill="none" stroke="#b8e4ff" stroke-width="1.9"/>
<rect x="374.5" y="419.1" width="72.3" height="20.6" rx="10.3" fill="#000"/>
<text x="383.6" y="436.3" font-family="Liberation Sans" font-size="17.5" fill="#e6e620" textLength="52.5" lengthAdjust="spacingAndGlyphs">80.0mV</text>
<line x1="463.6" y1="418" x2="463.6" y2="441.7" stroke="#0c0a60" stroke-width="1.2"/><line x1="465.1" y1="418" x2="465.1" y2="441.7" stroke="#3a64e4" stroke-width="1.6"/>
<rect x="474.2" y="419.1" width="120.6" height="19.6" rx="9.8" fill="#000"/>
<text x="495" y="435.9" font-family="Liberation Sans" font-size="16.5" fill="#e6e620" textLength="78" lengthAdjust="spacingAndGlyphs">0.00000Hz</text>
<text x="612.5" y="435.7" font-family="Liberation Sans" font-size="15.6" fill="#ececff" textLength="115" lengthAdjust="spacingAndGlyphs">24-May-17 07:34</text>
</svg>
</body></html>
